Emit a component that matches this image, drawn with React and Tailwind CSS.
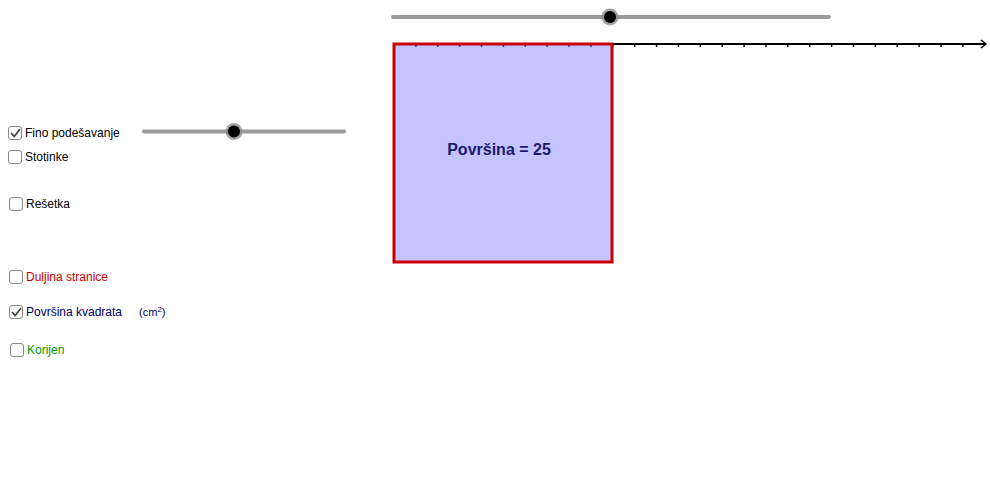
import React from "react";

const font = { fontFamily: '"Liberation Sans", Arial, sans-serif' };

const rows = [
  { label: "Fino podešavanje", checked: true, color: "text-black", cls: "mt-[126px] ml-[8px]" },
  { label: "Stotinke", checked: false, color: "text-black", cls: "mt-[10px] ml-[8px]" },
  { label: "Rešetka", checked: false, color: "text-black", cls: "mt-[33px] ml-[9px]" },
  { label: "Duljina stranice", checked: false, color: "text-[#cc0000]", cls: "mt-[59px] ml-[9px]" },
  { label: "Površina kvadrata", checked: true, color: "text-[#000066]", cls: "mt-[21px] ml-[9px]", unit: true },
  { label: "Korijen", checked: false, color: "text-[#009900]", cls: "mt-[24px] ml-[10px]" },
];

function Checkbox({ checked }) {
  return (
    <span className="flex h-[14px] w-[14px] shrink-0 items-center justify-center rounded-[3px] border-[1.5px] border-[#8a8a8a] bg-white">
      {checked && (
        <svg width="11" height="11" viewBox="0 0 11 11">
          <path d="M1.5 5.5 L4.3 8.6 L9.6 1.6" fill="none" stroke="#444" strokeWidth="1.7" strokeLinecap="round" strokeLinejoin="round" />
        </svg>
      )}
    </span>
  );
}

function Slider({ x1, x2, y, knob }) {
  return (
    <g>
      <line x1={x1} y1={y} x2={x2} y2={y} stroke="#9a9a9a" strokeWidth="4" strokeLinecap="round" />
      <circle cx={knob} cy={y} r="8.5" fill="#8c8c8c" opacity="0.8" />
      <circle cx={knob} cy={y} r="6" fill="#000" />
    </g>
  );
}

export default function App() {
  const ticks = [];
  for (let i = 1; i <= 26; i++) ticks.push(394 + i * 21.88);

  return (
    <div className="relative h-[490px] w-[990px] overflow-hidden bg-white" style={font}>
      <svg className="absolute left-0 top-0" width="990" height="490">
        <Slider x1={393} x2={829} y={17} knob={610} />
        <Slider x1={144} x2={344} y={131.5} knob={234} />

        <rect x="394" y="44" width="218" height="218" fill="#c4c4ff" />
        {ticks.map((t, i) =>
          t < 985 ? (
            <line key={i} x1={t} y1={44} x2={t} y2={47} stroke={t < 612 ? "#3a3a80" : "#000"} strokeWidth="1.5" />
          ) : null
        )}
        <line x1="394" y1="44" x2="985" y2="44" stroke="#000" strokeWidth="1.8" />
        <path d="M981 40 L986 44 L981 48" fill="none" stroke="#000" strokeWidth="1.6" strokeLinejoin="round" />
        <rect x="394" y="44" width="218" height="218" fill="none" stroke="#cc0000" strokeWidth="3" />
        <text x="499" y="155" textAnchor="middle" fontSize="16" fontWeight="bold" fill="#1a1a6e" style={font}>
          Površina = 25
        </text>
      </svg>

      <div className="relative flex flex-col">
        {rows.map((r) => (
          <div key={r.label} className={`flex h-[14px] items-center gap-[3px] ${r.cls}`}>
            <Checkbox checked={r.checked} />
            <span className={`text-[12px] leading-[14px] whitespace-nowrap ${r.color}`}>{r.label}</span>
            {r.unit && (
              <span className="ml-[14px] text-[11px] leading-[14px] text-[#000066]">
                (cm<sup className="text-[8px]">2</sup>)
              </span>
            )}
          </div>
        ))}
      </div>
    </div>
  );
}
